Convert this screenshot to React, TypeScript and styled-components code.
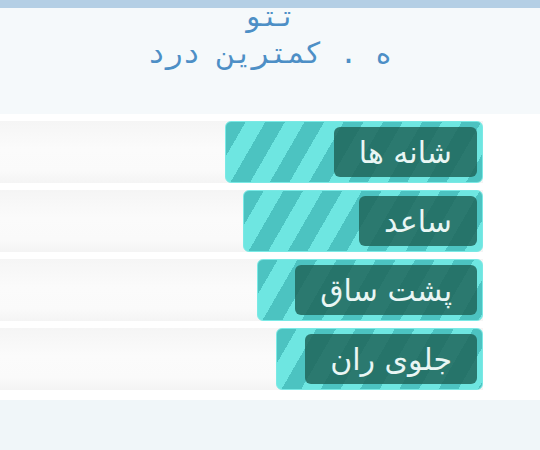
import React from 'react';
import styled, { createGlobalStyle } from 'styled-components';

const GlobalStyle = createGlobalStyle`
  body {
    margin: 0;
    background: #f0f6f9;
    font-family: "DejaVu Sans", "Noto Sans", sans-serif;
  }
`;

const Page = styled.div`
  width: 540px;
  height: 450px;
  overflow: hidden;
  display: flex;
  flex-direction: column;
  background: #f0f6f9;
`;

const TopBar = styled.div`
  height: 8px;
  background: #b4cfe5;
`;

const Header = styled.div`
  height: 106px;
  overflow: hidden;
  background: #f5f9fb;
  direction: rtl;
  text-align: center;
`;

const Title = styled.div`
  margin-top: -10px;
  font-family: "DejaVu Sans Mono", monospace;
  font-size: 29px;
  line-height: 37px;
  color: #4d8fc6;
`;

const Panel = styled.div`
  background: #ffffff;
  padding: 7px 0 10px;
  display: flex;
  flex-direction: column;
  gap: 7px;
`;

const Track = styled.div`
  direction: rtl;
  width: 483px;
  height: 62px;
  display: flex;
  background: linear-gradient(#f5f5f5, #fbfbfb 45%, #fafafa 80%, #f4f4f4);
`;

const Fill = styled.div<{ $width: number }>`
  width: ${(p) => p.$width}px;
  box-sizing: border-box;
  padding: 5px;
  display: flex;
  border-radius: 6px;
  border: 1px solid #7ae9e5;
  background: repeating-linear-gradient(
    120deg,
    #4cc3c1 0 17px,
    #6ee6e1 17px 34px
  );
`;

const Label = styled.div`
  display: flex;
  align-items: center;
  padding: 0 25px;
  border-radius: 6px;
  background: rgba(33, 103, 92, 0.86);
  color: #e9f6f4;
  font-size: 30px;
  white-space: nowrap;
`;

const rows = [
  { label: 'شانه ها', width: 258 },
  { label: 'ساعد', width: 240 },
  { label: 'پشت ساق', width: 226 },
  { label: 'جلوی ران', width: 207 },
];

const App: React.FC = () => (
  <Page>
    <GlobalStyle />
    <TopBar />
    <Header>
      <Title>
        تتو
        <br />
        ه . کمترین درد
      </Title>
    </Header>
    <Panel>
      {rows.map((r) => (
        <Track key={r.label}>
          <Fill $width={r.width}>
            <Label>{r.label}</Label>
          </Fill>
        </Track>
      ))}
    </Panel>
  </Page>
);

export default App;
